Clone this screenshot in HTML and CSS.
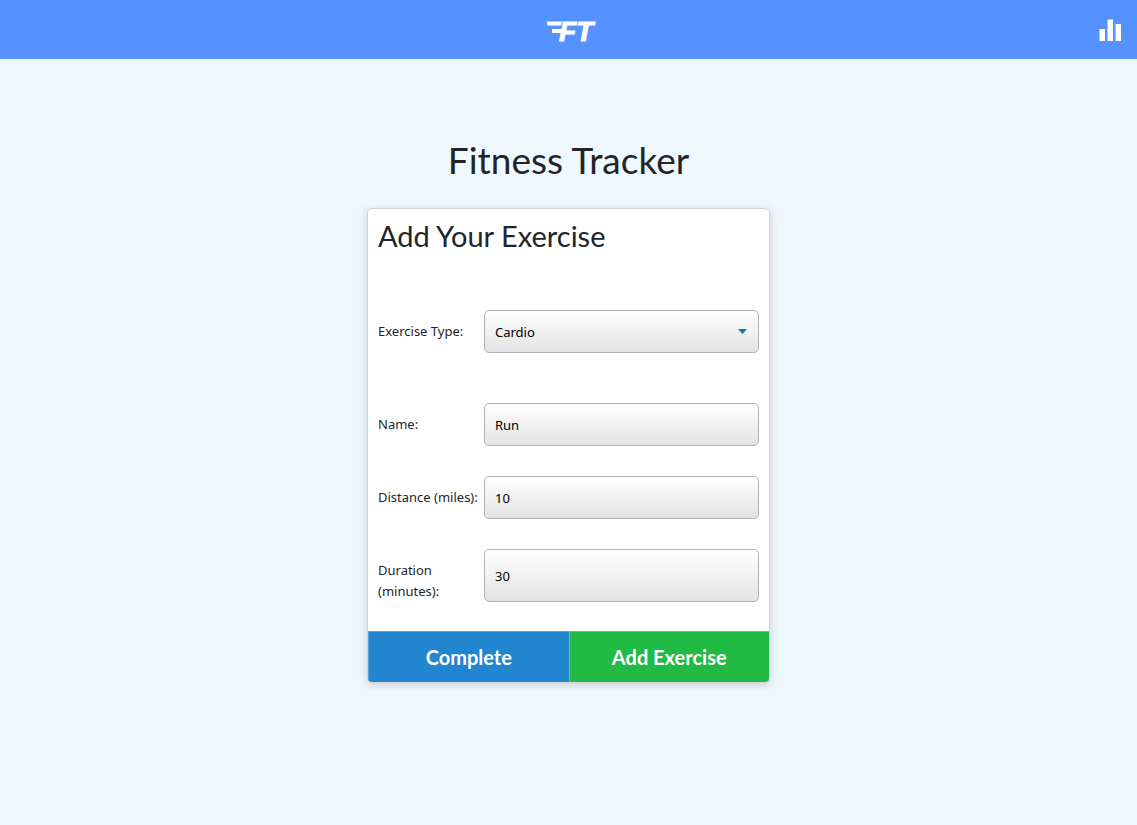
FILE: index.html
```html
<!DOCTYPE html>
<html lang="en">
<head>
<meta charset="utf-8">
<meta name="viewport" content="width=device-width, initial-scale=1">
<title>Fitness Tracker</title>
<link rel="stylesheet" href="styles.css">
</head>
<body>
<header class="navbar">
  <a class="logo" href="#" aria-label="Fitness Tracker home">
    <svg width="56" height="32" viewBox="0 0 56 32" fill="#fff" aria-hidden="true">
      <path d="M5.500 7.500h15.500l-1 4H6.500zM11 15h11l-1 4H11z"/>
      <text class="logo-text" x="18" y="27">FT</text>
    </svg>
  </a>
  <a class="stats-link" href="#" aria-label="Dashboard">
    <svg width="24" height="24" viewBox="0 0 24 24" fill="#fff" aria-hidden="true">
      <rect x="1.500" y="11" width="5.500" height="12"/>
      <rect x="9.500" y="1.500" width="5.500" height="21.500"/>
      <rect x="17.500" y="6" width="5.500" height="17"/>
    </svg>
  </a>
</header>
<main class="page">
  <h1 class="page-title">Fitness Tracker</h1>
  <form class="card">
    <h2 class="card-title">Add Your Exercise</h2>
    <div class="fields">
      <div class="row row-type">
        <label class="label" for="type">Exercise Type:</label>
        <div class="select-wrap">
          <select class="control" id="type">
            <option selected>Cardio</option>
            <option>Resistance</option>
          </select>
        </div>
      </div>
      <div class="row">
        <label class="label" for="name">Name:</label>
        <input class="control" id="name" type="text" value="Run">
      </div>
      <div class="row">
        <label class="label" for="distance">Distance (miles):</label>
        <input class="control" id="distance" type="text" inputmode="numeric" value="10">
      </div>
      <div class="row">
        <label class="label" for="duration">Duration (minutes):</label>
        <input class="control" id="duration" type="text" inputmode="numeric" value="30">
      </div>
    </div>
    <div class="actions">
      <button class="button complete" type="button">Complete</button>
      <button class="button add" type="button">Add Exercise</button>
    </div>
  </form>
</main>
</body>
</html>
```
FILE: styles.css
```css
*,
*::before,
*::after {
  box-sizing: border-box;
}

body {
  margin: 0;
  min-height: 100vh;
  background: #f0f8ff;
  color: #212529;
  font-family: "Noto Sans", "Open Sans", sans-serif;
  font-size: 13px;
  line-height: 21px;
}

.navbar {
  display: grid;
  grid-template-columns: 1fr auto 1fr;
  align-items: center;
  min-height: 59px;
  padding: 0 15px;
  background: #5592ff;
}

.navbar svg {
  display: block;
}

.logo {
  grid-column: 2;
}

.logo-text {
  font: italic bold 28px "Liberation Sans", Arial, sans-serif;
  stroke: #fff;
  stroke-width: 1px;
}

.stats-link {
  justify-self: end;
}

.page {
  padding: 79px 16px;
}

.page-title,
.card-title {
  margin: 0;
  font-family: Lato, sans-serif;
  font-weight: 400;
}

.page-title {
  margin-bottom: 26px;
  font-size: 37px;
  line-height: 44px;
  text-align: center;
}

.card {
  max-width: 403px;
  margin: 0 auto;
  border: 1px solid #d4d4d5;
  border-radius: 5px;
  background: #fff;
  box-shadow: 0 2px 8px rgba(34, 36, 38, 0.2);
}

.card-title {
  padding: 9px 10px;
  font-size: 29px;
  line-height: 35px;
}

.fields {
  display: flex;
  flex-direction: column;
  gap: 30px;
  padding: 48px 10px 29px;
}

.row {
  display: grid;
  grid-template-columns: 106px 1fr;
  min-height: 43px;
}

.row-type {
  margin-bottom: 20px;
}

.label {
  padding-top: 11px;
}

.select-wrap {
  position: relative;
  display: grid;
}

.select-wrap::after {
  content: "";
  position: absolute;
  top: 19px;
  right: 12px;
  width: 9px;
  height: 5px;
  background: #007cb6;
  clip-path: polygon(0 0, 100% 0, 50% 100%);
  pointer-events: none;
}

.control {
  appearance: none;
  width: 100%;
  margin: 0;
  padding: 1px 10px 0;
  border: 1px solid #b2b2b2;
  border-radius: 5px;
  background: linear-gradient(#fff, #e3e3e3);
  color: #000;
  font: inherit;
}

.actions {
  display: grid;
  grid-template-columns: 1fr 1fr;
  overflow: hidden;
  border-radius: 0 0 4px 4px;
}

.button {
  padding: 13px 8px;
  border: 1px solid rgba(255, 255, 255, 0.25);
  border-width: 1px 0 0 1px;
  color: #fff;
  font-family: Lato, sans-serif;
  font-size: 20px;
  font-weight: 700;
  line-height: 24px;
  cursor: pointer;
}

.complete {
  background: #2185d0;
}

.add {
  background: #21ba45;
}
```
